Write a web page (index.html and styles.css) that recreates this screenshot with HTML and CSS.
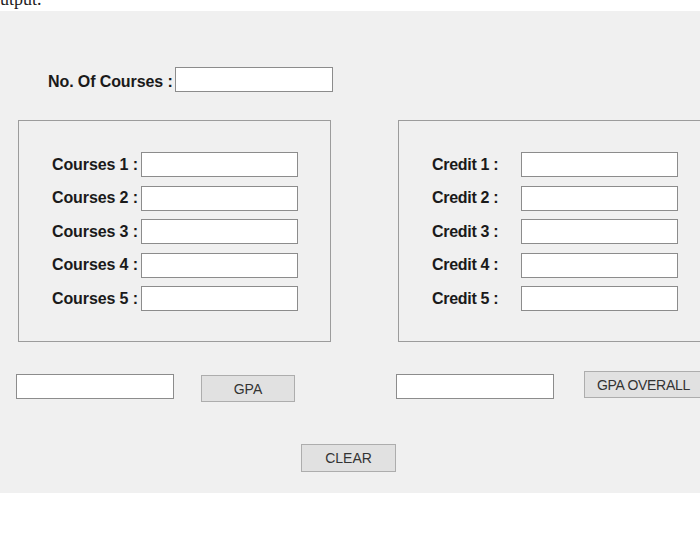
FILE: index.html
```html
<!DOCTYPE html>
<html>
<head>
<meta charset="utf-8">
<link rel="stylesheet" href="styles.css">
</head>
<body>
<div class="caption"><div class="caption-text">Output.</div></div>
<div class="panel">
  <div class="top-row">
    <span class="lbl lbl-count">No. Of Courses :</span>
    <input class="box" type="text">
  </div>
  <div class="groups">
    <div class="group group-left">
      <div class="field-grid grid-courses">
        <span class="lbl">Courses 1 :</span><input class="box" type="text">
        <span class="lbl">Courses 2 :</span><input class="box" type="text">
        <span class="lbl">Courses 3 :</span><input class="box" type="text">
        <span class="lbl">Courses 4 :</span><input class="box" type="text">
        <span class="lbl">Courses 5 :</span><input class="box" type="text">
      </div>
    </div>
    <div class="group group-right">
      <div class="field-grid grid-credits">
        <span class="lbl">Credit 1 :</span><input class="box" type="text">
        <span class="lbl">Credit 2 :</span><input class="box" type="text">
        <span class="lbl">Credit 3 :</span><input class="box" type="text">
        <span class="lbl">Credit 4 :</span><input class="box" type="text">
        <span class="lbl">Credit 5 :</span><input class="box" type="text">
      </div>
    </div>
  </div>
  <div class="bottom-row">
    <input class="box out-left" type="text">
    <button class="btn btn-gpa">GPA</button>
    <input class="box out-right" type="text">
    <button class="btn btn-overall">GPA OVERALL</button>
  </div>
  <div class="clear-row">
    <button class="btn btn-clear">CLEAR</button>
  </div>
</div>
</body>
</html>
```

FILE: styles.css
```css
html, body {
  margin: 0;
  padding: 0;
  background: #ffffff;
}
body {
  width: 700px;
  height: 543px;
  overflow: hidden;
}
.caption {
  height: 11px;
  overflow: hidden;
}
.caption-text {
  margin-top: -11px;
  margin-left: -13px;
  font-family: "Liberation Serif", serif;
  font-size: 18px;
  line-height: 20px;
  color: #222;
}
.panel {
  background: #f0f0f0;
  height: 482px;
  overflow: hidden;
  display: flex;
  flex-direction: column;
  padding-top: 56px;
  box-sizing: border-box;
}
.lbl {
  font-family: "Liberation Sans", Arial, sans-serif;
  font-weight: bold;
  font-size: 16px;
  letter-spacing: -0.1px;
  color: #1a1a1a;
  white-space: nowrap;
}
.box {
  box-sizing: border-box;
  width: 158px;
  height: 25px;
  margin: 0;
  padding: 0;
  background: #ffffff;
  border: 1px solid #8c8c8c;
  outline: none;
}
.top-row {
  display: flex;
  align-items: center;
  gap: 3px;
  height: 25px;
}
.lbl-count {
  width: 124px;
  margin-left: 48px;
  text-align: right;
  padding-top: 4px;
}
.groups {
  display: flex;
  margin-top: 28px;
}
.group {
  box-sizing: border-box;
  height: 222px;
  border: 1px solid #9c9c9c;
  padding-top: 31px;
  flex: none;
}
.group-left {
  margin-left: 18px;
  width: 313px;
}
.group-right {
  margin-left: 67px;
  width: 330px;
  padding-left: 33px;
}
.field-grid {
  display: grid;
  row-gap: 8.5px;
  column-gap: 3px;
  align-items: center;
}
.field-grid .box {
  width: 157px;
}
.grid-courses {
  grid-template-columns: 119px 157px;
}
.grid-courses .lbl {
  text-align: right;
}
.grid-credits {
  grid-template-columns: 86px 157px;
  column-gap: 3px;
}
.grid-credits .lbl {
  letter-spacing: -0.3px;
}
.bottom-row {
  display: flex;
  align-items: flex-start;
  margin-top: 29px;
  height: 31px;
}
.btn {
  box-sizing: border-box;
  margin: 0;
  padding: 0;
  background: #e1e1e1;
  border: 1px solid #adadad;
  font-family: "Liberation Sans", Arial, sans-serif;
  font-size: 14px;
  color: #333333;
  flex: none;
}
.out-left {
  margin-left: 16px;
  margin-top: 3px;
  flex: none;
}
.btn-gpa {
  margin-left: 27px;
  margin-top: 4px;
  width: 94px;
  height: 27px;
}
.out-right {
  margin-left: 101px;
  margin-top: 3px;
  flex: none;
}
.btn-overall {
  margin-left: 30px;
  width: 120px;
  height: 27px;
  letter-spacing: -0.3px;
  text-align: left;
  padding-left: 12px;
}
.clear-row {
  display: flex;
  margin-top: 42px;
}
.btn-clear {
  margin-left: 301px;
  width: 95px;
  height: 28px;
}
```
